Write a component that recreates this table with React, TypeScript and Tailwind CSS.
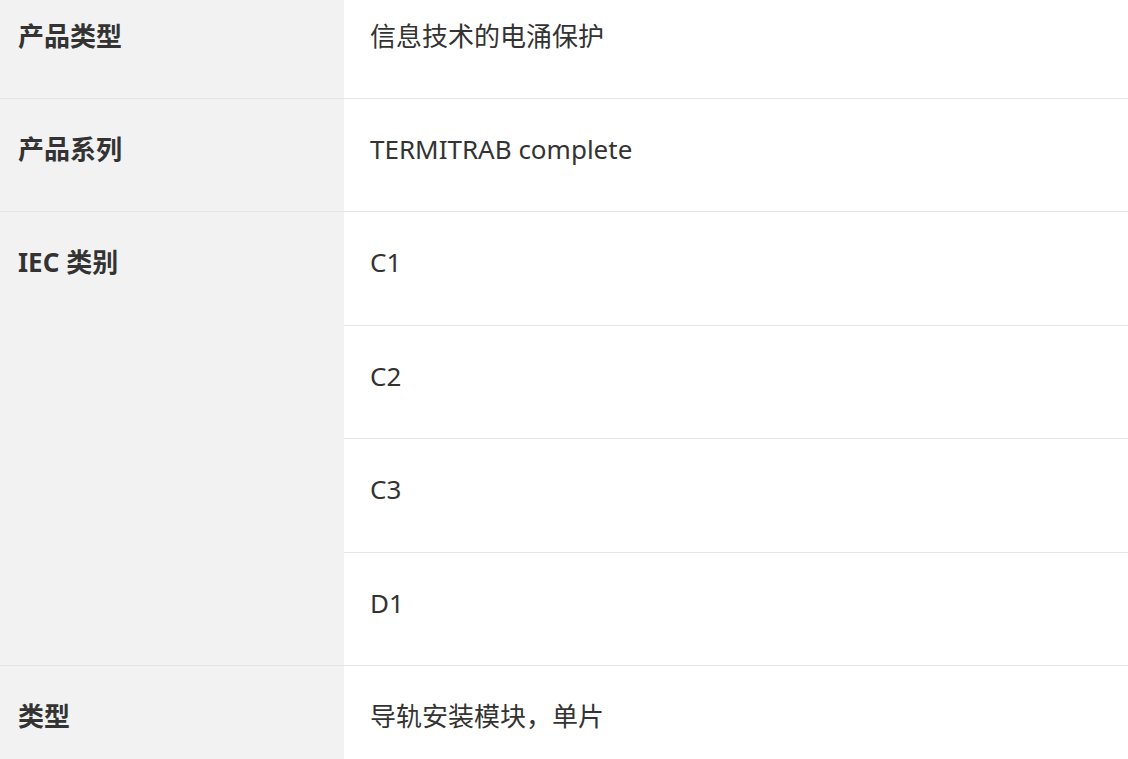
const rows: { label: string; values: string[] }[] = [
  { label: "产品类型", values: ["信息技术的电涌保护"] },
  { label: "产品系列", values: ["TERMITRAB complete"] },
  { label: "IEC 类别", values: ["C1", "C2", "C3", "D1"] },
  { label: "类型", values: ["导轨安装模块，单片"] },
];

export default function App() {
  return (
    <div
      className="w-full h-[759px] bg-white text-[#333333] text-[26px] overflow-hidden"
      style={{ fontFamily: '"Noto Sans", "Noto Sans CJK SC", sans-serif' }}
    >
      {rows.map((row, i) => (
        <div key={row.label} className="grid grid-cols-[344px_1fr] border-b border-[#e5e5e8]">
          <div
            className={`bg-[#f2f2f2] px-[18px] font-bold leading-[34px] ${
              i === 0 ? "pt-[19px]" : "pt-[33px]"
            }`}
          >
            {row.label}
          </div>
          <div>
            {row.values.map((v, j) => {
              const last = j === row.values.length - 1;
              return (
                <div
                  key={v}
                  className={`px-[26px] leading-[34px] ${
                    i === 0 ? "h-[98px] pt-[19px]" : last ? "h-[112.4px] pt-[33px]" : "h-[113.4px] pt-[33px]"
                  } ${last ? "" : "border-b border-[#e5e5e8]"}`}
                >
                  {v}
                </div>
              );
            })}
          </div>
        </div>
      ))}
    </div>
  );
}
